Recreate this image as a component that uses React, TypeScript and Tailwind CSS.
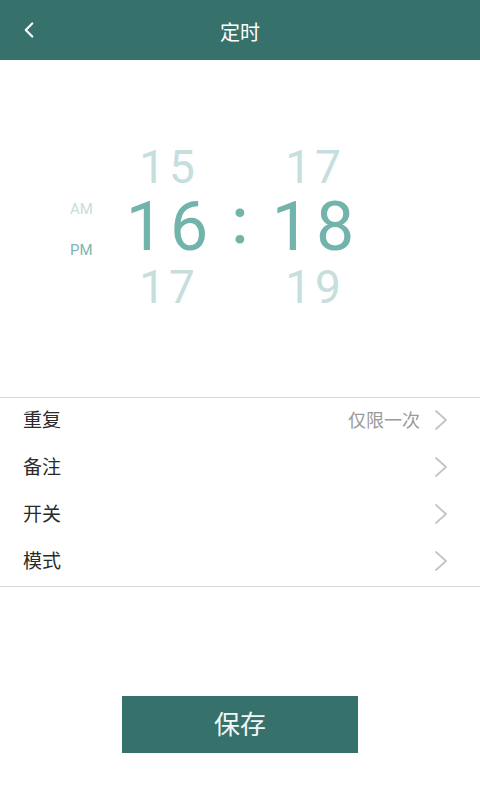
import { ChevronLeft } from 'lucide-react';

const rows = [
  { label: '重复', value: '仅限一次' },
  { label: '备注', value: '' },
  { label: '开关', value: '' },
  { label: '模式', value: '' },
];

function Chevron() {
  return (
    <svg width="14" height="22" viewBox="0 0 14 22" fill="none">
      <path d="M2 2 L12 11 L2 20" stroke="#c4c4c4" strokeWidth="1.8" strokeLinecap="round" strokeLinejoin="round" />
    </svg>
  );
}

function Column({ top, mid, bottom }: { top: string; mid: string; bottom: string }) {
  return (
    <div className="flex flex-col items-center w-[110px]">
      <div className="h-[60px] flex items-center text-[46px] leading-none tracking-[4px] pl-[4px] text-[#c6dedc]">{top}</div>
      <div className="h-[60px] flex items-center text-[68px] leading-none tracking-[6px] pl-[6px] text-[#72b3ac]">{mid}</div>
      <div className="h-[60px] flex items-center text-[46px] leading-none tracking-[4px] pl-[4px] text-[#c6dedc]">{bottom}</div>
    </div>
  );
}

export default function App() {
  return (
    <div className="w-[480px] h-[800px] bg-white flex flex-col font-['Roboto','Noto_Sans_CJK_SC',sans-serif]">
      <div className="h-[60px] bg-[#37716b] flex items-center relative shrink-0">
        <ChevronLeft className="absolute left-[16px] text-white" size={26} strokeWidth={2} />
        <div className="flex-1 text-center text-white text-[20px] pt-[4px] font-['Noto_Sans_CJK_SC',sans-serif]">定时</div>
      </div>

      <div className="h-[337px] flex items-center pl-[70px] pb-[4px]">
        <div className="flex flex-col w-[42px] gap-[19px] text-[15px] pt-[6px]">
          <span className="text-[#c9dcdb]">AM</span>
          <span className="text-[#7fb4af]">PM</span>
        </div>
        <Column top="15" mid="16" bottom="17" />
        <div className="w-[36px] flex justify-center text-[64px] leading-none font-medium text-[#72b3ac] pb-[10px]">:</div>
        <Column top="17" mid="18" bottom="19" />
      </div>

      <div className="border-t border-b border-[#d8d8d8] font-['Noto_Sans_CJK_SC',sans-serif]">
        {rows.map((r) => (
          <div key={r.label} className="h-[47px] flex items-center pl-[23px] pr-[32px] pb-[4px]">
            <span className="flex-1 text-[19px] text-[#2a2a2a]">{r.label}</span>
            {r.value && <span className="text-[18px] text-[#9a9a9a] mr-[14px]">{r.value}</span>}
            <Chevron />
          </div>
        ))}
      </div>

      <div className="flex justify-center mt-[109px]">
        <button className="w-[236px] h-[57px] bg-[#37716b] text-[#f2f7f6] text-[26px] pb-[4px] font-['Noto_Sans_CJK_SC',sans-serif]">
          保存
        </button>
      </div>
    </div>
  );
}
